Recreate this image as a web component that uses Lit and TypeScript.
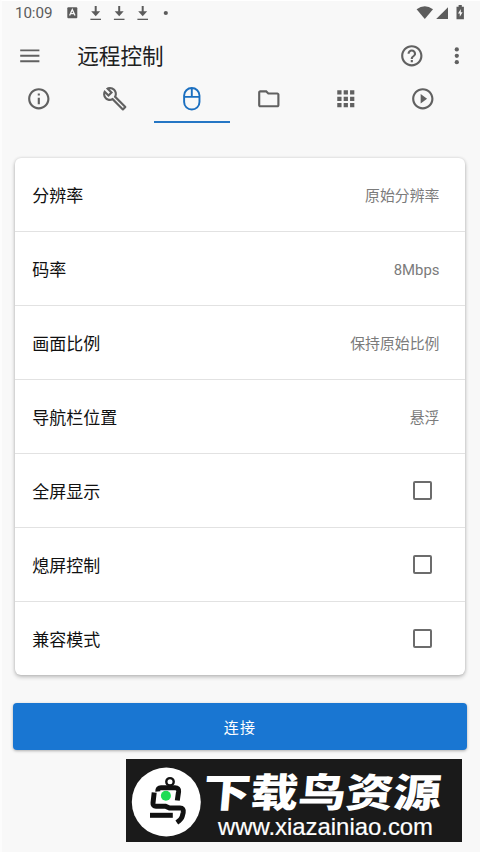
import { LitElement, html, css, svg } from "lit";
import { customElement } from "lit/decorators.js";
import { classMap } from "lit/directives/class-map.js";

const icon = (body: unknown, name = "") =>
  html`<svg class="icon ${name}" viewBox="0 0 24 24" fill="currentColor">${body}</svg>`;

const tabs = [
  svg`<path d="M11 7h2v2h-2zm0 4h2v6h-2zm1-9C6.48 2 2 6.48 2 12s4.48 10 10 10 10-4.48 10-10S17.52 2 12 2zm0 18c-4.41 0-8-3.59-8-8s3.59-8 8-8 8 3.59 8 8-3.59 8-8 8z"/>`,
  svg`<path d="M22.61 18.99l-9.08-9.08c.93-2.34.45-5.1-1.44-7C9.79.61 6.21.4 3.66 2.26L7.5 6.11 6.08 7.52 2.25 3.69C.39 6.23.6 9.82 2.9 12.11c1.86 1.86 4.57 2.35 6.89 1.48l9.11 9.11c.39.39 1.02.39 1.41 0l2.3-2.3c.4-.38.4-1.01 0-1.41zm-3 1.6l-9.46-9.46c-.61.45-1.29.72-2 .82-1.36.2-2.79-.21-3.83-1.25C3.37 9.76 2.93 8.5 3 7.26l3.09 3.09 4.24-4.24-3.09-3.09c1.24-.07 2.49.37 3.44 1.31 1.08 1.08 1.49 2.57 1.24 3.96-.12.71-.42 1.37-.88 1.96l9.45 9.45-.88.89z"/>`,
  svg`<path d="M4.8 10.2V9a7.2 7.1 0 0 1 14.4 0v6a7.2 7.1 0 0 1-14.4 0zM4.8 10.2h14.4M12 2v8.2" fill="none" stroke="currentColor" stroke-width="1.8"/>`,
  svg`<path d="M9.17 6l2 2H20v10H4V6h5.17M10 4H4c-1.1 0-1.99.9-1.99 2L2 18c0 1.1.9 2 2 2h16c1.1 0 2-.9 2-2V8c0-1.1-.9-2-2-2h-8l-2-2z"/>`,
  svg`<path d="M4 8h4V4H4v4zm6 12h4v-4h-4v4zm-6 0h4v-4H4v4zm0-6h4v-4H4v4zm6 0h4v-4h-4v4zm6-10v4h4V4h-4zm-6 4h4V4h-4v4zm6 6h4v-4h-4v4zm0 6h4v-4h-4v4z"/>`,
  svg`<path d="M10 16.5l6-4.5-6-4.5v9zM12 2C6.48 2 2 6.48 2 12s4.48 10 10 10 10-4.48 10-10S17.52 2 12 2zm0 18c-4.41 0-8-3.59-8-8s3.59-8 8-8 8 3.59 8 8-3.59 8-8 8z"/>`,
];

const rows: { label: string; value?: string }[] = [
  { label: "分辨率", value: "原始分辨率" },
  { label: "码率", value: "8Mbps" },
  { label: "画面比例", value: "保持原始比例" },
  { label: "导航栏位置", value: "悬浮" },
  { label: "全屏显示" },
  { label: "熄屏控制" },
  { label: "兼容模式" },
];

@customElement("status-bar")
class StatusBar extends LitElement {
  static styles = css`
    :host { display: block; height: 26px; color: #5c5c5c; }
    .bar { display: flex; justify-content: space-between; height: 26px; padding-left: 15px; }
    .time { width: 52px; font-size: 15.2px; line-height: 27px; letter-spacing: -0.1px; }
    .left, .right { display: flex; }
    svg { display: block; }
  `;
  render() {
    const arrow = (x: number) => svg`<path d="M${x} 6v7" stroke="#5c5c5c" stroke-width="2"/><path d="M${x - 4.5} 11.3h9l-4.5 4.9z"/><path d="M${x - 5.3} 18.7h10.6v1.3h-10.6z"/>`;
    return html`<div class="bar">
      <div class="left">
        <span class="time">10:09</span>
        <svg width="105" height="26" fill="currentColor">
          <rect x="0.3" y="7.3" width="10" height="11" rx="1"/>
          <path d="M2.6 15.5L5.3 9.5l2.7 6M3.6 13.7h3.4" fill="none" stroke="#f8f8f8" stroke-width="1.3"/>
          ${arrow(28.7)}${arrow(52.2)}${arrow(75.7)}
          <circle cx="98.8" cy="13" r="2.1"/>
        </svg>
      </div>
      <svg class="right" width="64" height="26" fill="currentColor">
        <path d="M.6 9.3Q8.8 3.1 17 9.3L8.8 19z"/>
        <path d="M32 7.2V19H20.2z"/>
        <path d="M42.6 5.1h3.2v1.7h2.1v12.4h-7.4V6.8h2.1z"/>
        <path d="M44.8 9l-2.8 4.4h1.8v3.4l2.8-4.6h-1.8z" fill="#f8f8f8"/>
      </svg>
    </div>`;
  }
}

@customElement("site-banner")
class SiteBanner extends LitElement {
  static styles = css`
    :host { display: block; width: 336px; height: 83px; background: #1a1a1a; }
    svg { display: block; }
    .name { font: 900 46px "Noto Sans CJK SC", sans-serif; }
    .url { font: 24px "Liberation Sans", Arial, sans-serif; }
  `;
  render() {
    return html`<svg width="336" height="83" fill="#fff">
      <circle cx="40.3" cy="43" r="34.5"/>
      <g fill="none" stroke="#111" stroke-width="5">
        <path d="M31.8 32.5q-.2-3.7 3.2-3.7h14q4 0 3.6 3.6L51.3 41.5"/>
        <path d="M28.2 33.5L27 44q-.3 3.2 3 3.2h9.5l4 1.8h10.5q4 0 3.2 4.5l-1 4q-.8 3-5.4 6"/>
        <path d="M24 56.3h22.8"/>
        <circle cx="44" cy="22.8" r="3.7" stroke-width="2.4"/>
      </g>
      <circle cx="39.9" cy="36.8" r="5" fill="#1edc55"/>
      <text class="name" transform="translate(76 48.2) skewX(-5) scale(1 .86)" textLength="238" lengthAdjust="spacingAndGlyphs">下载鸟资源</text>
      <text class="url" x="92" y="75.5" textLength="215" lengthAdjust="spacingAndGlyphs" stroke="#fff" stroke-width=".2">www.xiazainiao.com</text>
    </svg>`;
  }
}

@customElement("app-root")
class AppRoot extends LitElement {
  static styles = css`
    :host {
      display: block; box-sizing: border-box; height: 852px; overflow: hidden;
      background: #f8f8f8; color: #616161;
      border-top: 1px solid #fff; border-left: 2px solid #fcfcfc;
      font-family: Roboto, "Noto Sans CJK SC", sans-serif;
    }
    .page { display: flex; flex-direction: column; margin: -1px 0 0 -2px; }
    .icon { display: block; width: 25.6px; height: 25.6px; }
    .header { display: flex; align-items: center; height: 48px; margin-top: 5.5px; padding: 0 10.5px 0 17px; }
    .title { flex: 1; margin: 2px 0 0 34.6px; color: #202020; font-size: 21.6px; line-height: 30px; font-weight: 400; }
    .more { margin-left: 19px; }
    .tabs { display: grid; grid-template-columns: repeat(6, 76.8px); height: 43.5px; }
    .tab { display: flex; justify-content: center; padding-top: 6.7px; box-sizing: border-box; border-bottom: 2px solid transparent; }
    .active { color: #1b6fc0; border-color: #2576c4; }
    .card {
      margin: 34.5px 15px 0; background: #fff; border-radius: 6px;
      box-shadow: 0 2px 4px rgba(0,0,0,.24), 0 0 3px rgba(0,0,0,.13);
    }
    .row {
      display: flex; align-items: center; justify-content: space-between;
      box-sizing: border-box; height: 74px; padding: 0 25.5px 0 17.3px; border-bottom: 1px solid #e2e2e2;
    }
    .row:last-child { border: 0; height: 73.5px; }
    .label { color: #111; font-size: 17px; }
    .value { color: #7b7b7b; font-size: 14.9px; }
    .latin { padding-top: 3px; }
    .box { box-sizing: border-box; width: 19px; height: 19px; margin: 1px 7.5px 0 0; border: 2px solid #6c6c6c; border-radius: 2px; }
    .row:last-child .box { margin-top: 0; }
    .connect {
      margin: 28px 13px 0; height: 47px; padding: 0 0 1px; border: 0; border-radius: 4px;
      background: #1976d2; color: #fff; font: inherit; font-size: 15px; letter-spacing: 1.2px;
      box-shadow: 0 1px 3px rgba(0,0,0,.3);
    }
    .banner { margin: 8.5px 0 0 126px; }
  `;
  render() {
    return html`<div class="page">
      <status-bar></status-bar>
      <header class="header">
        ${icon(svg`<path d="M3 18h18v-1.8H3zm0-5.1h18v-1.8H3zM3 6v1.8h18V6z"/>`)}
        <h1 class="title">远程控制</h1>
        ${icon(svg`<path d="M11 18h2v-2h-2v2zm1-16C6.48 2 2 6.48 2 12s4.48 10 10 10 10-4.48 10-10S17.52 2 12 2zm0 18c-4.41 0-8-3.59-8-8s3.59-8 8-8 8 3.59 8 8-3.59 8-8 8zm0-14c-2.21 0-4 1.79-4 4h2c0-1.1.9-2 2-2s2 .9 2 2c0 2-3 1.75-3 5h2c0-2.25 3-2.5 3-5 0-2.21-1.79-4-4-4z"/>`)}
        ${icon(svg`<circle cx="12" cy="6" r="2"/><circle cx="12" cy="12" r="2"/><circle cx="12" cy="18" r="2"/>`, "more")}
      </header>
      <nav class="tabs">
        ${tabs.map((t, i) => html`<div class=${classMap({ tab: true, active: i === 2 })}>${icon(t)}</div>`)}
      </nav>
      <section class="card">
        ${rows.map((r) => html`<div class="row">
          <span class="label">${r.label}</span>
          ${r.value
            ? html`<span class=${classMap({ value: true, latin: /^[\x20-\x7e]+$/.test(r.value) })}>${r.value}</span>`
            : html`<span class="box"></span>`}
        </div>`)}
      </section>
      <button class="connect">连接</button>
      <site-banner class="banner"></site-banner>
    </div>`;
  }
}
